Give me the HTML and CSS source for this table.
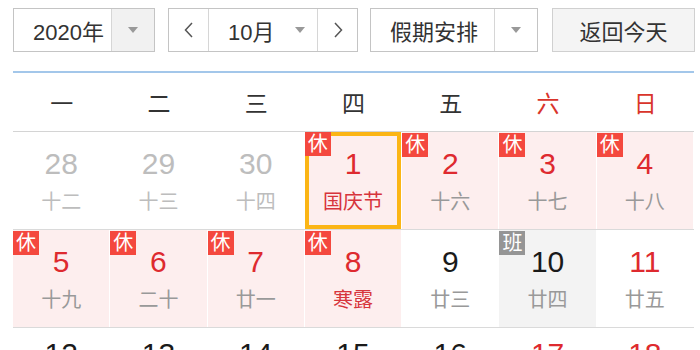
FILE: index.html
```html
<!DOCTYPE html>
<html lang="zh-CN">
<head>
    <meta charset="UTF-8">
    <title>万年历</title>
    <link rel="stylesheet" href="styles.css">
</head>
<body>
    <div class="calendar">
        <div class="toolbar">
            <div class="select year-select">
                <span class="select-text">2020年</span>
                <span class="select-arrow"><i class="caret"></i></span>
            </div>
            <div class="select month-select">
                <span class="nav-btn">
                    <svg width="10" height="16" viewBox="0 0 10 16"><polyline points="8,1 1.5,8 8,15" fill="none" stroke="#555" stroke-width="1.5"/></svg>
                </span>
                <span class="month-text">10月<i class="caret"></i></span>
                <span class="nav-btn">
                    <svg width="10" height="16" viewBox="0 0 10 16"><polyline points="2,1 8.5,8 2,15" fill="none" stroke="#555" stroke-width="1.5"/></svg>
                </span>
            </div>
            <div class="select holiday-select">
                <span class="select-text">假期安排</span>
                <span class="select-arrow plain"><i class="caret"></i></span>
            </div>
            <button class="today-btn">返回今天</button>
        </div>

        <div class="week-head">
            <span>一</span><span>二</span><span>三</span><span>四</span><span>五</span>
            <span class="weekend">六</span><span class="weekend">日</span>
        </div>

        <div class="week">
            <div class="day other"><b>28</b><em>十二</em></div>
            <div class="day other"><b>29</b><em>十三</em></div>
            <div class="day other"><b>30</b><em>十四</em></div>
            <div class="day rest today"><span class="tag">休</span><b>1</b><em class="fest">国庆节</em></div>
            <div class="day rest"><span class="tag">休</span><b>2</b><em>十六</em></div>
            <div class="day rest"><span class="tag">休</span><b>3</b><em>十七</em></div>
            <div class="day rest"><span class="tag">休</span><b>4</b><em>十八</em></div>
        </div>
        <div class="week">
            <div class="day rest"><span class="tag">休</span><b>5</b><em>十九</em></div>
            <div class="day rest"><span class="tag">休</span><b>6</b><em>二十</em></div>
            <div class="day rest"><span class="tag">休</span><b>7</b><em>廿一</em></div>
            <div class="day rest"><span class="tag">休</span><b>8</b><em class="fest">寒露</em></div>
            <div class="day"><b>9</b><em>廿三</em></div>
            <div class="day work"><span class="tag">班</span><b>10</b><em>廿四</em></div>
            <div class="day weekend"><b>11</b><em>廿五</em></div>
        </div>
        <div class="week">
            <div class="day"><b>12</b><em>廿六</em></div>
            <div class="day"><b>13</b><em>廿七</em></div>
            <div class="day"><b>14</b><em>廿八</em></div>
            <div class="day"><b>15</b><em>廿九</em></div>
            <div class="day"><b>16</b><em>三十</em></div>
            <div class="day weekend"><b>17</b><em>九月</em></div>
            <div class="day weekend"><b>18</b><em>初二</em></div>
        </div>
    </div>
</body>
</html>
```

FILE: styles.css
```css
body {
    margin: 0;
    background: #fff;
    color: #333;
    font-family: "Liberation Sans", "Noto Sans CJK SC", sans-serif;
}
.calendar {
    width: 682px;
    padding: 8px 0 0 13px;
}

/* 顶部工具栏 */
.toolbar {
    display: flex;
    gap: 13px;
    height: 44px;
}
.select {
    display: flex;
    box-sizing: border-box;
    height: 44px;
    border: 1px solid #c4c4c4;
    background: #fff;
    font-size: 22px;
}
.select-text {
    flex: 1;
    display: flex;
    align-items: center;
    padding-left: 19px;
}
.select-arrow {
    width: 42px;
    display: flex;
    align-items: center;
    justify-content: center;
    border-left: 1px solid #d6d6d6;
    background: #f1f1f1;
}
.select-arrow.plain {
    background: #fff;
}
.caret {
    display: inline-block;
    width: 0;
    height: 0;
    border-left: 5px solid transparent;
    border-right: 5px solid transparent;
    border-top: 6px solid #999;
}
.year-select { width: 142px; }
.month-select { width: 190px; }
.holiday-select { width: 168px; margin-left: -1px; }
.nav-btn {
    width: 39px;
    display: flex;
    align-items: center;
    justify-content: center;
}
.month-text {
    width: 110px;
    display: flex;
    align-items: center;
    border-left: 1px solid #d6d6d6;
    border-right: 1px solid #d6d6d6;
    padding-left: 19px;
    box-sizing: border-box;
}
.month-text .caret {
    margin-left: 21px;
}
.today-btn {
    margin-left: 1px;
    width: 143px;
    height: 44px;
    border: 1px solid #d0d0d0;
    background: #f4f4f4;
    color: #333;
    font: 22px "Liberation Sans", "Noto Sans CJK SC", sans-serif;
    padding: 0;
}

/* 星期表头 */
.week-head {
    margin-top: 19px;
    width: 681px;
    height: 58px;
    border-top: 2px solid #a3c7ea;
    border-bottom: 1px solid #d4d4d4;
    display: grid;
    grid-template-columns: repeat(7, 1fr);
    align-items: center;
    text-align: center;
    font-size: 23px;
    color: #333;
}
.week-head .weekend {
    color: #d9342b;
}

/* 日期格子 */
.week {
    width: 681px;
    height: 97px;
    border-bottom: 1px solid #dadada;
    display: grid;
    grid-template-columns: repeat(7, 1fr);
}
.week:last-child .day {
    padding-top: 8px;
}
.day {
    position: relative;
    display: flex;
    flex-direction: column;
    align-items: center;
    padding-top: 14px;
    border-right: 1px solid #fff;
}
.day b {
    font-weight: normal;
    font-size: 30px;
    line-height: 36px;
    color: #1a1a1a;
}
.day em {
    font-style: normal;
    font-size: 20px;
    line-height: 24px;
    margin-top: 8px;
    color: #999;
}
.day.other b,
.day.other em {
    color: #bdbdbd;
}
.day.rest {
    background: #fdeeee;
}
.day.rest b,
.day.weekend b {
    color: #de2a2f;
}
.day em.fest {
    color: #d7343c;
}
.day.work {
    background: #f3f3f3;
}
.day.today {
    box-shadow: inset 0 0 0 4px #fbb515;
}
.tag {
    position: absolute;
    top: 1px;
    left: 0;
    width: 26px;
    height: 24px;
    line-height: 24px;
    text-align: center;
    font-size: 20px;
    color: #fff;
    background: #f4483e;
}
.day.today .tag {
    top: 0;
}
.work .tag {
    background: #959595;
}
```
